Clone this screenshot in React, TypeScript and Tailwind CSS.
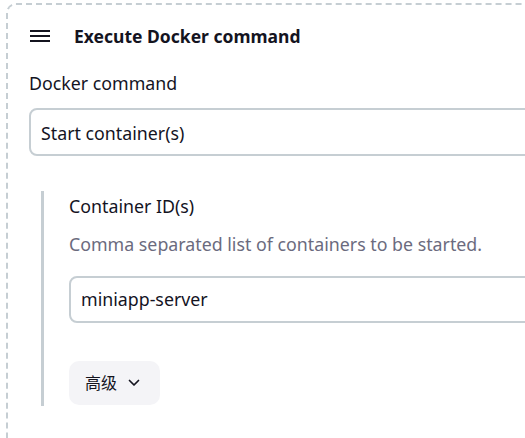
import React from "react";

export default function App() {
  return (
    <div className="w-[525px] h-[438px] overflow-hidden bg-white relative" style={{ fontFamily: '"Noto Sans", "Noto Sans CJK SC", sans-serif' }}>
      <div className="absolute left-[6px] top-[3px] w-[600px] h-[500px] border-2 border-dashed border-[#c6ced3] rounded-tl-[10px]">
        <div className="flex items-center h-[24px] mt-[19px] pl-[22px]">
          <svg width="20" height="12" viewBox="0 0 20 12" className="shrink-0">
            <rect x="0" y="0" width="20" height="2" fill="#14141f" />
            <rect x="0" y="5" width="20" height="2" fill="#14141f" />
            <rect x="0" y="10" width="20" height="2" fill="#14141f" />
          </svg>
          <span className="ml-[24px] text-[17.5px] font-bold text-[#14141f] leading-[24px]">Execute Docker command</span>
        </div>
        <div className="pl-[21px]">
          <div className="mt-[23px] text-[17.8px] leading-[24px] text-[#14141f]">Docker command</div>
          <div className="mt-[13px] w-[540px] h-[48px] border-2 border-[#c6ced3] rounded-[8px] flex items-center pl-[10px] pt-[2px] text-[17.8px] text-[#14141f]">
            Start container(s)
          </div>
          <div className="mt-[35px] ml-[12px] border-l-[3px] border-[#c6ced3] pl-[25px] pb-[1px]">
            <div className="pt-[3px] text-[17.8px] leading-[24px] text-[#14141f]">Container ID(s)</div>
            <div className="mt-[14px] text-[17.8px] leading-[24px] text-[#6b6b7e]">Comma separated list of containers to be started.</div>
            <div className="mt-[20px] w-[520px] h-[47px] border-2 border-[#c6ced3] rounded-[8px] flex items-center pl-[10px] text-[17.8px] text-[#14141f]">
              miniapp-server
            </div>
            <div className="mt-[38px] w-[91px] h-[44px] rounded-[10px] bg-[#f4f4f7] flex items-center pl-[16px] text-[16px] text-[#14141f]">
              <span>高级</span>
              <svg width="12" height="8" viewBox="0 0 12 8" className="ml-[11px]" fill="none" stroke="#14141f" strokeWidth="1.7" strokeLinecap="round" strokeLinejoin="round">
                <path d="M1.5 1.5 L6 6 L10.5 1.5" />
              </svg>
            </div>
          </div>
        </div>
      </div>
    </div>
  );
}
